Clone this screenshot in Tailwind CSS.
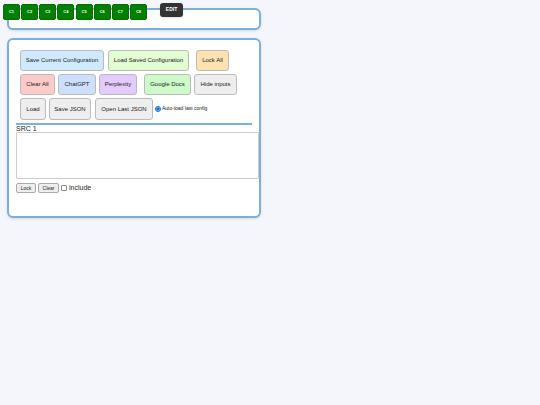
<!DOCTYPE html>
<html lang="en">

<head>
  <meta charset="UTF-8">
  <title>Prompt Builder</title>
  <script src="https://cdn.jsdelivr.net/npm/@tailwindcss/browser@4"></script>
</head>

<body class="bg-[#f4f6fb] font-['Liberation_Sans',Arial,sans-serif] text-[#222] h-[405px] overflow-hidden">
  <!-- top bar -->
  <div class="relative ml-[7px] mt-2 w-[254px] h-[22px] bg-white border-2 border-[#7db0d9] rounded-[6px] shadow-sm">
    <div class="absolute left-[-6px] top-[-6px] flex gap-[1.15px]">
      <button class="w-[17px] h-[16px] bg-[#008000] border border-[#0a6a0a] rounded-[2px] text-white text-[4px] font-bold">C1</button>
      <button class="w-[17px] h-[16px] bg-[#008000] border border-[#0a6a0a] rounded-[2px] text-white text-[4px] font-bold">C2</button>
      <button class="w-[17px] h-[16px] bg-[#008000] border border-[#0a6a0a] rounded-[2px] text-white text-[4px] font-bold">C3</button>
      <button class="w-[17px] h-[16px] bg-[#008000] border border-[#0a6a0a] rounded-[2px] text-white text-[4px] font-bold">C4</button>
      <button class="w-[17px] h-[16px] bg-[#008000] border border-[#0a6a0a] rounded-[2px] text-white text-[4px] font-bold">C5</button>
      <button class="w-[17px] h-[16px] bg-[#008000] border border-[#0a6a0a] rounded-[2px] text-white text-[4px] font-bold">C6</button>
      <button class="w-[17px] h-[16px] bg-[#008000] border border-[#0a6a0a] rounded-[2px] text-white text-[4px] font-bold">C7</button>
      <button class="w-[17px] h-[16px] bg-[#008000] border border-[#0a6a0a] rounded-[2px] text-white text-[4px] font-bold">C8</button>
    </div>
    <button class="absolute left-[151px] top-[-7px] w-[23px] h-[14px] bg-[#333] rounded-[3px] text-white text-[5px] font-bold shadow">EDIT</button>
  </div>

  <!-- main panel -->
  <div class="ml-[7px] mt-[8px] w-[254px] h-[180px] bg-white border-2 border-[#7db0d9] rounded-[6px] shadow-sm pt-[10px] pl-[7px]">
    <div class="pl-[4px] flex flex-col gap-[3px]">
      <div class="flex h-[21px] text-[6px]">
        <button class="w-[84px] bg-[#cfeafd] border border-[#bbb] rounded-[3px]">Save Current Configuration</button>
        <button class="w-[81px] ml-[4px] bg-[#e2fdd2] border border-[#bbb] rounded-[3px]">Load Saved Configuration</button>
        <button class="w-[33px] ml-[7px] bg-[#ffe2b0] border border-[#bbb] rounded-[3px]">Lock All</button>
      </div>
      <div class="flex h-[21px] text-[6px]">
        <button class="w-[35px] bg-[#ffcaca] border border-[#bbb] rounded-[3px]">Clear All</button>
        <button class="w-[38px] ml-[3px] bg-[#cde0fb] border border-[#bbb] rounded-[3px]">ChatGPT</button>
        <button class="w-[38px] ml-[3px] bg-[#e3cbfb] border border-[#bbb] rounded-[3px]">Perplexity</button>
        <button class="w-[47px] ml-[7px] bg-[#ccfbc9] border border-[#bbb] rounded-[3px]">Google Docs</button>
        <button class="w-[43px] ml-[3px] bg-[#eee] border border-[#bbb] rounded-[3px]">Hide inputs</button>
      </div>
      <div class="flex h-[22px] text-[6px] items-stretch">
        <button class="w-[26px] bg-[#eee] border border-[#bbb] rounded-[3px]">Load</button>
        <button class="w-[42px] ml-[3px] bg-[#eee] border border-[#bbb] rounded-[3px]">Save JSON</button>
        <button class="w-[58px] ml-[4px] bg-[#eee] border border-[#bbb] rounded-[3px]">Open Last JSON</button>
        <label class="flex items-center gap-[1px] ml-[2px] text-[5px]">
          <input type="radio" checked class="w-[6px] h-[6px] accent-[#0a6fdc]"> Auto-load last config
        </label>
      </div>
    </div>
    <div class="mt-[3px] w-[236px] h-[2px] bg-[#7db0d9]"></div>
    <div class="text-[7px] leading-[7px]">SRC 1</div>
    <textarea class="block w-[243px] h-[47px] bg-white border border-[#ccc] rounded-[1px] resize-none"></textarea>
    <div class="flex items-center gap-[2px] mt-[4px]">
      <button class="w-[20px] h-[10px] bg-[#eee] border border-[#aaa] rounded-[2px] text-[5px]">Lock</button>
      <button class="w-[21px] h-[10px] bg-[#eee] border border-[#aaa] rounded-[2px] text-[5px]">Clear</button>
      <label class="flex items-center gap-[2px] text-[7px]">
        <input type="checkbox" class="appearance-none w-[6px] h-[6px] bg-white border border-[#888] rounded-[1px]"> include
      </label>
    </div>
  </div>
</body>

</html>
